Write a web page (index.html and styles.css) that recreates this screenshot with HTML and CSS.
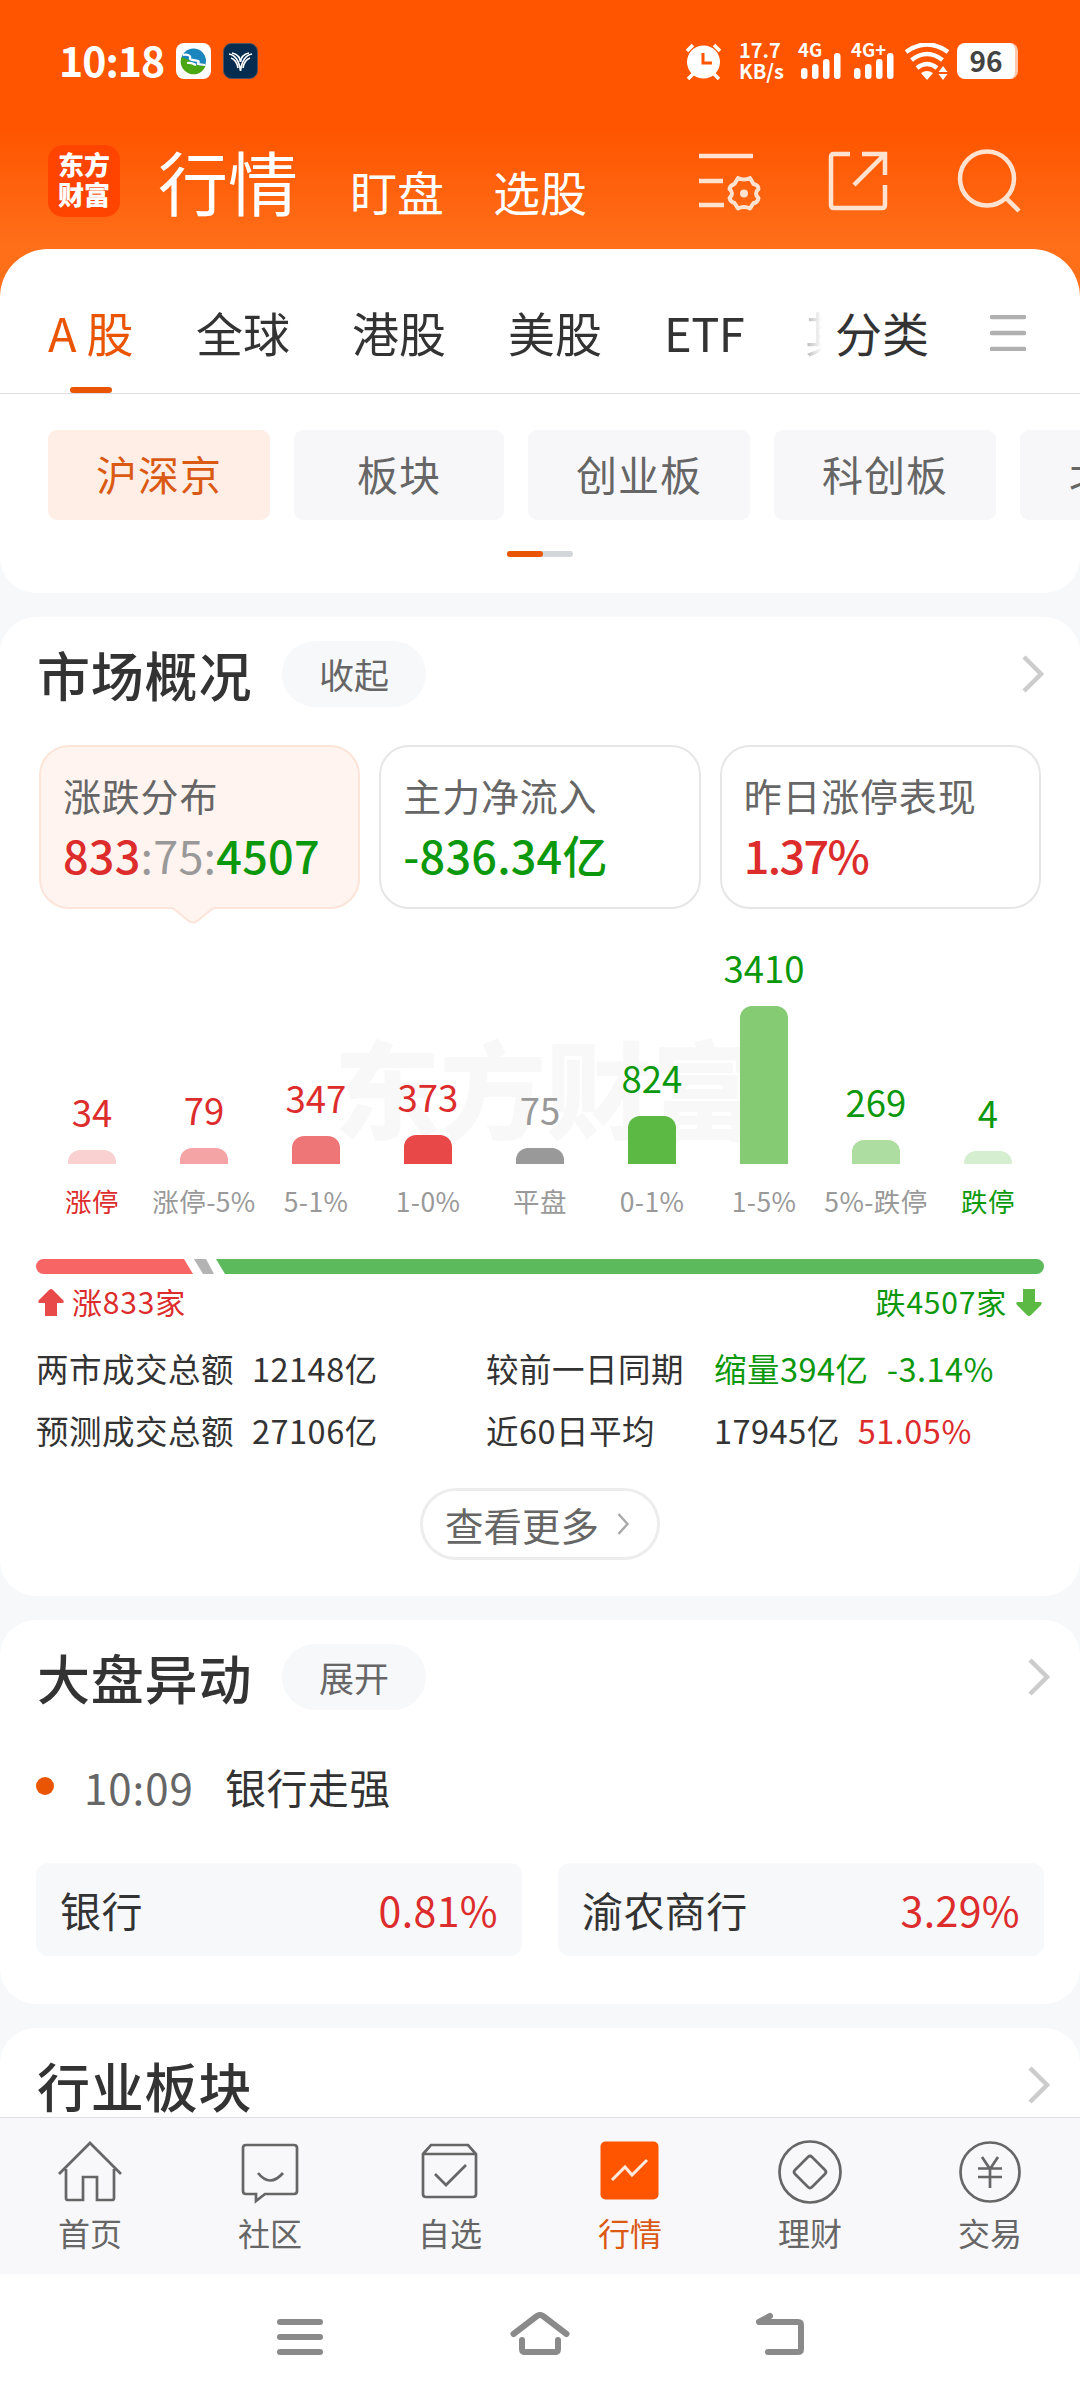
FILE: index.html
```html
<!DOCTYPE html>
<html lang="zh-CN">

<head>
    <meta charset="UTF-8">
    <meta name="viewport" content="width=device-width, initial-scale=1.0">
    <title>行情</title>
    <link rel="stylesheet" href="styles.css">
</head>

<body>
    <header class="top">
        <div class="status-bar">
            <span class="clock">10:18</span>
            <svg class="app-badge" width="35" height="36" viewBox="0 0 35 36">
                <rect width="35" height="36" rx="8" fill="#fff"/>
                <circle cx="17.500" cy="18" r="12.500" fill="#1b86bd"/>
                <path d="M5.500 14c4 2 8 2 9 5s6 3 15 4a12.500 12.500 0 0 1-24-9z" fill="#4ba614"/>
                <path d="M7 12c5-1 8 1 7 3s4 2 8 3c2 1-1 2 0 3l7 1M11 20c5-1 6 1 9 2" fill="none" stroke="#fff" stroke-width="2.200"/>
            </svg>
            <svg class="app-badge second" width="35" height="36" viewBox="0 0 35 36">
                <rect x=".5" y=".5" width="34" height="35" rx="8" fill="#062c50" stroke="#4d5363"/>
                <g fill="none" stroke="#fff" stroke-width="1.700">
                    <path d="M6 11c6 1 10 6 11.500 17C19 17 23 12 29 11"/>
                    <path d="M9 10c5 1 8 4 8.500 9 .5-5 3.500-8 8.500-9"/>
                    <path d="M8 15c3 1 6 4 7 10M27 15c-3 1-6 4-7 10"/>
                </g>
            </svg>
            <div class="status-right">
                <svg width="37" height="38" viewBox="0 0 37 38">
                    <circle cx="18.500" cy="19" r="16.500" fill="#fff"/>
                    <path d="M2 8l6-6M35 8l-6-6M8 31l-5 5M29 31l5 5" stroke="#fff" stroke-width="3.500"/>
                    <path d="M18 10v10h9" fill="none" stroke="#ff5500" stroke-width="3"/>
                </svg>
                <div class="speed"><span>17.7</span><span>KB/s</span></div>
                <div class="signal">
                    <span>4G</span>
                    <svg width="40" height="26" viewBox="0 0 40 26" fill="#fff">
                        <rect y="15" width="6.500" height="11" rx="3"/>
                        <rect x="11" y="11" width="6.500" height="15" rx="3"/>
                        <rect x="22" y="6" width="6.500" height="20" rx="3"/>
                        <rect x="33" width="6.500" height="26" rx="3"/>
                    </svg>
                </div>
                <div class="signal">
                    <span>4G+</span>
                    <svg width="40" height="26" viewBox="0 0 40 26" fill="#fff">
                        <rect y="15" width="6.500" height="11" rx="3"/>
                        <rect x="11" y="11" width="6.500" height="15" rx="3"/>
                        <rect x="22" y="6" width="6.500" height="20" rx="3"/>
                        <rect x="33" width="6.500" height="26" rx="3"/>
                    </svg>
                </div>
                <svg class="wifi" width="44" height="37" viewBox="0 0 44 37">
                    <g fill="none" stroke="#fff" stroke-width="4.500">
                        <path d="M1 9q21-15 42 0"/>
                        <path d="M6.500 17q15.500-12 31 0"/>
                        <path d="M12 25q10-8 20 0"/>
                    </g>
                    <path d="M16 30q6-4 12 0l-6 7zM33.500 29l4.500-6 4.500 6zM33.500 31l4.500 6 4.500-6z" fill="#fff"/>
                </svg>
                <div class="battery">96</div>
            </div>
        </div>
        <div class="app-bar">
            <div class="logo"><span>东方</span><span>财富</span></div>
            <nav class="titles">
                <span class="title-main">行情</span>
                <span>盯盘</span>
                <span>选股</span>
            </nav>
            <div class="tools">
                <svg width="62" height="62" viewBox="0 0 62 62" fill="none" stroke="#ffe3d0" stroke-width="4.500">
                    <path d="M0 7h54M0 32h24M0 56h25"/>
                    <path d="M39 29q6 3 12 0l3.500 6q5 1 5 5-5 4.500 0 9-1 5-5 5L51 59.500q-6-3-12 0L35.500 54q-4-1-5-5 5-4.500 0-9 1-4 5-5z" stroke-linejoin="round" stroke-width="4"/>
                    <circle cx="45" cy="44.500" r="4" fill="#ffe3d0" stroke="none"/>
                </svg>
                <svg width="62" height="62" viewBox="0 0 62 62" fill="none" stroke="#ffe3d0" stroke-width="4.500">
                    <path d="M22 5H6Q3 5 3 8v48q0 3 3 3h48q3 0 3-3V36"/>
                    <path d="M34 5h23v21M57 5L26 36"/>
                </svg>
                <svg width="64" height="66" viewBox="0 0 64 66" fill="none" stroke="#ffe3d0" stroke-width="4.500">
                    <circle cx="30" cy="29.500" r="27"/>
                    <path d="M48 48l14 14"/>
                </svg>
            </div>
        </div>
    </header>

    <main class="content">
        <section class="card market-tabs">
            <div class="tabs">
                <div class="tab-list">
                    <span class="tab active">A<i></i>股</span>
                    <span class="tab">全球</span>
                    <span class="tab">港股</span>
                    <span class="tab">美股</span>
                    <span class="tab etf">ETF</span>
                    <span class="tab">其</span>
                </div>
                <span class="tab">分类</span>
                <svg class="menu" width="36" height="36" viewBox="0 0 36 36">
                    <path d="M2 2h32M2 18h32M2 34h32" stroke="#b0b0b0" stroke-width="4.500" stroke-linecap="round"/>
                </svg>
            </div>
            <div class="chips">
                <span class="chip active">沪深京</span>
                <span class="chip short">板块</span>
                <span class="chip">创业板</span>
                <span class="chip">科创板</span>
                <span class="chip">北交所</span>
            </div>
            <div class="pager"><span></span></div>
        </section>

        <section class="card overview">
            <div class="card-head">
                <h2>市场概况</h2>
                <span class="pill">收起</span>
                <svg class="chevron" width="22" height="38" viewBox="0 0 22 38"><path d="M2 2l17 17L2 36"/></svg>
            </div>
            <div class="stats">
                <div class="stat active">
                    <p>涨跌分布</p>
                    <b><span class="up">833</span><span class="flat">:75:</span><span class="down">4507</span></b>
                    <svg class="stat-arrow" width="42" height="17" viewBox="0 0 42 17">
                        <path d="M0 0v2q2 0 4 2l12 10q5 4 10 0L38 4q2-2 4-2V0z" fill="#fff4ef"/>
                        <path d="M0 1.500q2 0 4 2l12 10q5 4 10 0l12-10q2-2 4-2" fill="none" stroke="#fce4d9" stroke-width="2"/>
                    </svg>
                </div>
                <div class="stat">
                    <p>主力净流入</p>
                    <b class="down">-836.34亿</b>
                </div>
                <div class="stat">
                    <p>昨日涨停表现</p>
                    <b class="up percent">1.37%</b>
                </div>
            </div>

            <div class="chart">
                <div class="watermark">东方财富</div>
                <div class="col up"><span>34</span><i class="bar r1" style="height: 14px"></i></div>
                <div class="col up"><span>79</span><i class="bar r2" style="height: 16px"></i></div>
                <div class="col up"><span>347</span><i class="bar r3" style="height: 28px"></i></div>
                <div class="col up"><span>373</span><i class="bar r4" style="height: 29px"></i></div>
                <div class="col flat"><span>75</span><i class="bar g0" style="height: 16px"></i></div>
                <div class="col down"><span>824</span><i class="bar g4" style="height: 48px"></i></div>
                <div class="col down"><span>3410</span><i class="bar g3" style="height: 158px"></i></div>
                <div class="col down"><span>269</span><i class="bar g2" style="height: 24px"></i></div>
                <div class="col down"><span>4</span><i class="bar g1" style="height: 13px"></i></div>
            </div>
            <div class="axis">
                <span class="up">涨停</span>
                <span>涨停-5%</span>
                <span>5-1%</span>
                <span>1-0%</span>
                <span>平盘</span>
                <span>0-1%</span>
                <span>1-5%</span>
                <span>5%-跌停</span>
                <span class="down">跌停</span>
            </div>

            <svg class="ratio" width="1008" height="15" viewBox="0 0 1008 15">
                <path d="M7.500 0H148l9 15H7.500a7.500 7.500 0 0 1 0-15z" fill="#f86565"/>
                <path d="M158 0h12l8 15h-11z" fill="#b3b3b3"/>
                <path d="M180 0h820.500a7.500 7.500 0 0 1 0 15H189z" fill="#5cba5c"/>
            </svg>
            <div class="ratio-text">
                <svg width="26" height="27" viewBox="0 0 26 27"><path d="M13 0q1 0 2 1l10 10q2 3-1 3h-5v13H7V14H2q-3 0-1-3L11 1q1-1 2-1z" fill="#e84a4a"/></svg>
                <span class="up">涨833家</span>
                <span class="down right">跌4507家</span>
                <svg width="26" height="27" viewBox="0 0 26 27"><path d="M13 27q1 0 2-1l10-10q2-3-1-3h-5V0H7v13H2q-3 0-1 3l10 10q1 1 2 1z" fill="#5cb944"/></svg>
            </div>

            <div class="totals">
                <span>两市成交总额</span><span>12148亿</span>
                <span>较前一日同期</span><span class="down">缩量394亿<em>-3.14%</em></span>
                <span>预测成交总额</span><span>27106亿</span>
                <span>近60日平均</span><span>17945亿<em class="up">51.05%</em></span>
            </div>
            <div class="more">查看更多
                <svg width="14" height="24" viewBox="0 0 14 24"><path d="M1.500 2l9 10-9 10" fill="none" stroke="#aaa" stroke-width="2.500"/></svg>
            </div>
        </section>

        <section class="card moves">
            <div class="card-head">
                <h2>大盘异动</h2>
                <span class="pill">展开</span>
                <svg class="chevron" width="22" height="38" viewBox="0 0 22 38"><path d="M2 2l17 17L2 36"/></svg>
            </div>
            <div class="event">
                <i class="dot"></i>
                <span class="time">10:09</span>
                <span>银行走强</span>
            </div>
            <div class="stocks">
                <div class="stock"><span>银行</span><span class="up">0.81%</span></div>
                <div class="stock"><span>渝农商行</span><span class="up">3.29%</span></div>
            </div>
        </section>

        <section class="card industry">
            <div class="card-head">
                <h2>行业板块</h2>
                <svg class="chevron" width="22" height="38" viewBox="0 0 22 38"><path d="M2 2l17 17L2 36"/></svg>
            </div>
        </section>
    </main>

    <nav class="tab-bar">
        <div class="tab-item">
            <svg width="64" height="66" viewBox="0 0 64 66">
                <path d="M1 34L32 3l31 31M8 29v29q0 2 2 2h15V37h14v23h15q2 0 2-2V29"/>
            </svg>
            <span>首页</span>
        </div>
        <div class="tab-item">
            <svg width="64" height="66" viewBox="0 0 64 66">
                <path d="M8 5h48q3 0 3 3v43q0 3-3 3H27l-9 7v-7H8q-3 0-3-3V8q0-3 3-3zM20 33q12 15 25 0"/>
            </svg>
            <span>社区</span>
        </div>
        <div class="tab-item">
            <svg width="64" height="66" viewBox="0 0 64 66">
                <path d="M5 14l8-9h37l8 9v40q0 3-3 3H8q-3 0-3-3zM5 14h53M17 34l11 11 20-20"/>
            </svg>
            <span>自选</span>
        </div>
        <div class="tab-item active">
            <svg width="64" height="66" viewBox="0 0 64 66">
                <rect x="2.500" y="1.500" width="58" height="58" rx="5" fill="#ff5500" stroke="none"/>
                <path d="M14 40l13-13 7 8 15-15" stroke="#ffeadf" stroke-width="3"/>
            </svg>
            <span>行情</span>
        </div>
        <div class="tab-item">
            <svg width="64" height="66" viewBox="0 0 64 66">
                <circle cx="32" cy="32" r="30.500"/>
                <path d="M34 17l13 13q2 2 0 4L34 47q-2 2-4 0L17 34q-2-2 0-4l13-13q2-2 4 0z"/>
            </svg>
            <span>理财</span>
        </div>
        <div class="tab-item">
            <svg width="64" height="66" viewBox="0 0 64 66">
                <circle cx="32" cy="32" r="29.500"/>
                <path d="M24 17l8 12 8-12M32 28v20M20 28.500h24M20 37h24"/>
            </svg>
            <span>交易</span>
        </div>
    </nav>

    <div class="sys-nav">
        <svg width="60" height="50" viewBox="0 0 60 50"><path d="M10 10h40M10 25h40M10 40h40"/></svg>
        <svg width="60" height="50" viewBox="0 0 60 50"><path d="M3.500 22L27 4q3-2 6 0l23.500 18M12 28v9q0 3 3 3h30q3 0 3-3v-9"/></svg>
        <svg width="60" height="50" viewBox="0 0 60 50"><path d="M20 4L9 10h39q3 0 3 3v24q0 3-3 3H18"/></svg>
    </div>
</body>

</html>
```
FILE: styles.css
```css
* {
    box-sizing: border-box;
}

body {
    margin: 0;
    width: 1080px;
    height: 2400px;
    overflow: hidden;
    display: flex;
    flex-direction: column;
    font-family: "Noto Sans CJK SC", sans-serif;
    color: #333;
    background: #f6f8fa;
}

h2, p {
    margin: 0;
}

i, em {
    font-style: normal;
}

svg {
    display: block;
    flex: none;
}

.up {
    color: #dc2c2c;
}

.down {
    color: #0c980c;
}

.flat {
    color: #999;
}

/* Cabecera */
.top {
    flex: none;
    height: 297px;
    color: #fff;
    background: linear-gradient(#ff5500 130px, #ff6f1a 249px);
}

.status-bar {
    display: flex;
    align-items: flex-start;
    height: 118px;
    padding: 43px 62px 0 59px;
}

.clock {
    width: 117px;
    font-size: 41px;
    font-weight: 700;
    line-height: 32px;
    letter-spacing: -1px;
}

.app-badge.second {
    margin-left: 12px;
}

.status-right {
    display: flex;
    margin-left: auto;
}

.speed {
    display: flex;
    flex-direction: column;
    width: 60px;
    padding-left: 17px;
    font-size: 20px;
    font-weight: 700;
    line-height: 21px;
    margin-top: -4px;
    white-space: nowrap;
}

.signal {
    position: relative;
    width: 53px;
    padding: 10px 0 0 19px;
}

.signal span {
    position: absolute;
    left: 16px;
    top: -4px;
    font-size: 18.5px;
    font-weight: 700;
    line-height: 21px;
}

.wifi {
    margin-left: 17px;
}

.battery {
    width: 61px;
    height: 36px;
    margin-left: 8px;
    border-right: 3px solid #ffc7ac;
    border-radius: 8px;
    background: #fff;
    color: #444;
    font-size: 28px;
    font-weight: 700;
    line-height: 34px;
    text-align: center;
}

.app-bar {
    display: flex;
    height: 131px;
    padding: 27px 59px 0 48px;
}

.logo {
    display: flex;
    flex-direction: column;
    align-items: center;
    width: 72px;
    height: 72px;
    padding-top: 4px;
    border-radius: 15px;
    background: #ff4400;
    font-size: 26px;
    font-weight: 900;
    line-height: 30px;
}

.titles {
    display: flex;
    align-items: baseline;
    gap: 49px;
    margin-left: 38px;
    height: 72px;
    font-size: 47px;
    line-height: 72px;
}

.title-main {
    font-size: 70px;
    margin-right: 3px;
}

.tools {
    display: flex;
    gap: 67px;
    margin-left: auto;
    padding-top: 4px;
}

/* Contenido */
.content {
    display: flex;
    flex-direction: column;
    gap: 24px;
    height: 1868px;
    margin-top: -48px;
    overflow: hidden;
}

.card {
    flex: none;
    padding: 0 36px;
    border-radius: 36px;
    background: #fff;
}

.market-tabs {
    height: 344px;
    padding: 0;
    border-radius: 48px 48px 36px 36px;
    overflow: hidden;
}

.tabs {
    display: flex;
    height: 145px;
    padding-left: 48px;
    border-bottom: 1px solid #dedede;
    font-size: 47px;
    line-height: 70px;
}

.tab-list {
    display: flex;
    gap: 62px;
    width: 774px;
    margin-right: 13px;
    overflow: hidden;
    -webkit-mask-image: linear-gradient(to right, #000 750px, rgba(0, 0, 0, 0.35) 758px, transparent 774px);
    mask-image: linear-gradient(to right, #000 750px, rgba(0, 0, 0, 0.35) 758px, transparent 774px);
}

.tab {
    position: relative;
    flex: none;
    padding-top: 48px;
}

.tab.etf {
    width: 79px;
    letter-spacing: -0.5px;
}

.tab i {
    display: inline-block;
    width: 10px;
}

.tab.active {
    width: 86px;
    color: #ea5504;
}

.tab.active::after {
    content: "";
    position: absolute;
    left: 22px;
    bottom: 0;
    width: 42px;
    height: 6px;
    border-radius: 3px;
    background: #ea5504;
}

.menu {
    margin: 66px 0 0 61px;
}

.chips {
    display: flex;
    gap: 24px;
    padding: 36px 0 0 48px;
}

.chip {
    flex: none;
    width: 222px;
    height: 90px;
    border-radius: 9px;
    background: #f7f7f9;
    color: #666;
    font-size: 41px;
    line-height: 87px;
    letter-spacing: 1px;
    text-align: center;
}

.chip.short {
    width: 210px;
}

.chip.active {
    background: #ffeee6;
    color: #da5a14;
}

.chip:last-child {
    padding-left: 49px;
    text-align: left;
    white-space: nowrap;
}

.pager {
    width: 66px;
    height: 6px;
    margin: 31px auto 0;
    border-radius: 3px;
    background: #d3d6da;
}

.pager span {
    display: block;
    width: 36px;
    height: 6px;
    border-radius: 3px;
    background: #ea5504;
}

.overview {
    height: 979px;
}

.card-head {
    display: flex;
    align-items: center;
    padding-top: 24px;
}

.card-head h2 {
    width: 246px;
    padding-left: 1px;
    font-size: 53px;
    font-weight: 500;
    line-height: 66px;
    letter-spacing: 0.8px;
    white-space: nowrap;
}

.card-head h2 + .pill {
    flex: none;
}

.pill {
    width: 144px;
    height: 66px;
    border-radius: 33px;
    background: #f6f8fa;
    color: #666;
    font-size: 35px;
    line-height: 65px;
    text-align: center;
}

.chevron {
    margin-left: auto;
    fill: none;
    stroke: #ccc;
    stroke-width: 4.5px;
}

.stats {
    display: grid;
    grid-template-columns: repeat(3, 1fr);
    gap: 19px;
    margin: 38px 3px 0;
}

.stat {
    position: relative;
    height: 164px;
    padding: 21px 0 0 22px;
    border: 2px solid #e6e6e6;
    border-radius: 30px;
}

.stat.active {
    border-color: #fce4d9;
    background: #fff4ef;
}

.stat p {
    color: #666;
    font-size: 38px;
    line-height: 54px;
    letter-spacing: 0.8px;
}

.stat b {
    display: block;
    font-size: 45px;
    font-weight: 500;
    line-height: 66px;
    letter-spacing: 0.2px;
    white-space: nowrap;
}

.stat b.percent {
    letter-spacing: -1.6px;
}

.stat b .flat {
    font-weight: 400;
}

.stat-arrow {
    position: absolute;
    left: 131px;
    top: 160px;
}

.chart {
    position: relative;
    display: flex;
    height: 255px;
}

.watermark {
    position: absolute;
    left: 298px;
    top: 106px;
    color: #f8f8f8;
    font-size: 106px;
    font-weight: 900;
    line-height: 140px;
}

.col {
    position: relative;
    flex: 1;
    display: flex;
    flex-direction: column;
    justify-content: flex-end;
    align-items: center;
    font-size: 36.5px;
    line-height: 40px;
}

.col span {
    margin-bottom: 18px;
}

.bar {
    width: 48px;
    border-radius: 12px 12px 0 0;
}

.r1 { background: #f9d1d1; }
.r2 { background: #f4a4a5; }
.r3 { background: #ee7677; }
.r4 { background: #e84848; }
.g0 { background: #999; }
.g4 { background: #5cb944; }
.g3 { background: #84cb74; }
.g2 { background: #addda1; }
.g1 { background: #d6eed0; }

.axis {
    display: flex;
    height: 95px;
    font-size: 26.5px;
    line-height: 36px;
    letter-spacing: 0.4px;
    color: #999;
}

.axis span {
    flex: 1 1 0;
    min-width: 0;
    padding-top: 19px;
    text-align: center;
    white-space: nowrap;
}

.axis .up {
    color: #dc2c2c;
}

.axis .down {
    color: #0c980c;
}

.ratio-text {
    display: flex;
    align-items: center;
    height: 40px;
    margin-top: 8px;
    padding: 0 2px;
    font-size: 30px;
    line-height: 36px;
    letter-spacing: 0.8px;
}

.ratio-text span {
    margin: -3px 9px 0 8px;
}

.ratio-text .right {
    margin-left: auto;
}

.totals {
    display: grid;
    grid-template-columns: 216px 234px 228px 1fr;
    margin-top: 15px;
    font-size: 32.5px;
    line-height: 62px;
    letter-spacing: 0.5px;
    white-space: nowrap;
}

.totals em {
    margin-left: 18px;
}

.more {
    display: flex;
    align-items: center;
    justify-content: center;
    gap: 18px;
    width: 240px;
    height: 72px;
    margin: 27px auto 0;
    padding-right: 4px;
    border: 3px solid #ededed;
    border-radius: 36px;
    color: #666;
    font-size: 38.5px;
    line-height: 60px;
    white-space: nowrap;
}

.moves {
    height: 384px;
}

.moves .chevron,
.industry .chevron {
    margin-right: -6px;
}

.event {
    display: flex;
    align-items: center;
    height: 60px;
    margin-top: 46px;
    font-size: 41px;
    letter-spacing: 0.4px;
}

.dot {
    width: 18px;
    height: 18px;
    border-radius: 50%;
    background: #ea5504;
}

.time {
    width: 141px;
    margin-left: 30px;
    color: #666;
    font-size: 42px;
    letter-spacing: 1px;
}

.stocks {
    display: grid;
    grid-template-columns: 1fr 1fr;
    gap: 36px;
    margin-top: 47px;
}

.stock {
    display: flex;
    justify-content: space-between;
    height: 93px;
    padding: 0 24px;
    border-radius: 12px;
    background: #f6f8fa;
    font-size: 41px;
    line-height: 92px;
    letter-spacing: 0.4px;
}

.industry {
    height: 300px;
}

/* Barra inferior */
.tab-bar {
    flex: none;
    display: flex;
    height: 157px;
    border-top: 1px solid #dfdfe1;
    background: #f8f8fa;
}

.tab-item {
    flex: 1;
    display: flex;
    flex-direction: column;
    align-items: center;
    padding-top: 22px;
    color: #666;
    font-size: 32px;
    line-height: 52px;
}

.tab-item svg {
    fill: none;
    stroke: #666;
    stroke-width: 2.7px;
}

.tab-item.active {
    color: #da5a14;
}

.sys-nav {
    flex: none;
    display: flex;
    justify-content: center;
    gap: 180px;
    height: 126px;
    padding-top: 38px;
    background: #fff;
}

.sys-nav svg {
    fill: none;
    stroke: #8a8a8a;
    stroke-width: 6px;
    stroke-linecap: round;
    stroke-linejoin: round;
}
```
